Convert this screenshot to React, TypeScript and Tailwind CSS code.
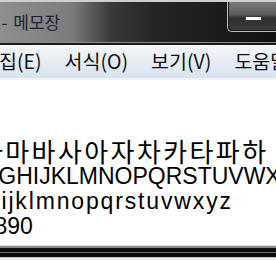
const hangul = "'Noto Sans CJK KR', 'Noto Sans', sans-serif";
const latin = "'Liberation Sans', 'Noto Sans CJK KR', Arial, sans-serif";

const menus = ["편집(E)", "서식(O)", "보기(V)", "도움말(H)"];

const lines = [
  { text: "가나다라마바사아자차카타파하", font: hangul, cls: "text-[26px] tracking-[2.4px] ml-[-5px]" },
  { text: "ABCDEFGHIJKLMNOPQRSTUVWXYZ", font: latin, cls: "text-[23px]" },
  { text: "abcdefghijklmnopqrstuvwxyz", font: latin, cls: "text-[23px] tracking-[1.85px] ml-[-13px]" },
  { text: "1234567890", font: latin, cls: "text-[23px]" },
];

export default function App() {
  return (
    <div className="w-[276px] h-[260px] overflow-hidden flex flex-col bg-[#111]">
      {/* top frame edge */}
      <div className="h-[2px] bg-[#cfcfcf]" />

      {/* title bar */}
      <div className="h-[40px] flex justify-between bg-[linear-gradient(90deg,#8e8e8e_0%,#7c7c7c_26%,#3a3a3a_40%,#262626_55%,#1b1b1b_80%,#121212_100%)]">
        <div
          className="flex items-center whitespace-nowrap text-[17px] text-[#20203a] ml-[-76px] pb-[1px]"
          style={{ fontFamily: hangul }}
        >
          <span>제목 없음</span>
          <span className="ml-[11px]">-</span>
          <span className="ml-[6px]">메모장</span>
        </div>
        <div className="w-[50px] h-[30px] mr-[-1px] flex items-center justify-center rounded-bl-[5px] border-l border-b border-[#bdbdbd] bg-[linear-gradient(180deg,#7a7a7a_0%,#5a5a5a_45%,#2e2e2e_55%,#3c3c3c_100%)] shadow-[inset_1px_-1px_0_#1a1a1a]">
          <div className="w-[17px] h-[5px] bg-white border border-[#3a3a3a] rounded-[1px] ml-[1px] mt-[3px]" />
        </div>
      </div>

      {/* frame below title */}
      <div className="h-[1px] bg-[#8a8a8a]" />
      <div className="h-[2px] bg-[#1a1a1a]" />

      {/* menu bar */}
      <div
        className="h-[33px] flex items-center whitespace-nowrap text-[19.5px] text-[#111] bg-[linear-gradient(180deg,#f4f7fb_0%,#e6ecf4_50%,#dae3ee_100%)]"
        style={{ fontFamily: hangul }}
      >
        <div className="flex gap-[23px] ml-[-19px] pb-[1px]">
          {menus.map((m) => (
            <span key={m}>{m}</span>
          ))}
        </div>
      </div>
      <div className="h-[2px] bg-[#f2f2f2]" />

      {/* edit area */}
      <div className="flex-1 bg-white overflow-hidden pt-[59px] text-black">
        <div className="ml-[-95px] whitespace-nowrap">
          {lines.map((l) => (
            <div
              key={l.text}
              className={`leading-[24px] h-[25px] ${l.cls}`}
              style={{ fontFamily: l.font }}
            >
              {l.text}
            </div>
          ))}
        </div>
      </div>

      {/* bottom frame */}
      <div className="h-[1px] bg-[#d3e7f1]" />
      <div className="h-[2px] bg-[#8c8c8c]" />
      <div className="h-[4px] bg-[#0e0e0e]" />
      <div className="h-[1px] bg-[#6e6e6e]" />
      <div className="h-[4px] bg-[#0a0a0a]" />
      <div className="h-[1px] bg-[#c4c4c4]" />
      <div className="h-[2px] bg-[#f0f0f0]" />
    </div>
  );
}
